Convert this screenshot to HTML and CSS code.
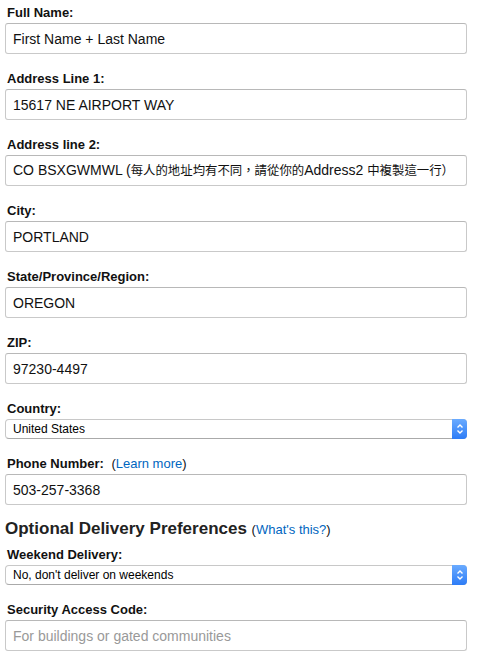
FILE: index.html
```html
<!DOCTYPE html>
<html>
	<head>
		<meta charset="UTF-8" />
		<meta name="viewport" content="width=device-width, initial-scale=1.0" />
		<title>Shipping address</title>
		<link rel="stylesheet" href="styles.css">
	</head>
	<body>
		<form class="address-form">
			<div class="field">
				<label class="field-label">Full Name:</label>
				<input class="text-input" type="text" value="First Name + Last Name" />
			</div>
			<div class="field">
				<label class="field-label">Address Line 1:</label>
				<input class="text-input" type="text" value="15617 NE AIRPORT WAY" />
			</div>
			<div class="field">
				<label class="field-label">Address line 2:</label>
				<!-- mixed latin / cjk value, cjk glyphs are set a bit smaller -->
				<div class="text-input text-mixed" contenteditable="true">CO BSXGWMWL (<span class="cjk">每人的地址均有不同，請從你的</span>Address2 <span class="cjk">中複製這一行）</span></div>
			</div>
			<div class="field">
				<label class="field-label">City:</label>
				<input class="text-input" type="text" value="PORTLAND" />
			</div>
			<div class="field">
				<label class="field-label">State/Province/Region:</label>
				<input class="text-input" type="text" value="OREGON" />
			</div>
			<div class="field">
				<label class="field-label">ZIP:</label>
				<input class="text-input" type="text" value="97230-4497" />
			</div>
			<div class="field">
				<label class="field-label">Country:</label>
				<div class="select-box">
					<select class="select-input">
						<option>United States</option>
					</select>
					<span class="select-arrows">
						<svg width="8" height="12" viewBox="0 0 8 12"><path d="M1.5 4.5 L4 2 L6.5 4.5 M1.5 7.5 L4 10 L6.5 7.5" fill="none" stroke="#fff" stroke-width="1.4"/></svg>
					</span>
				</div>
			</div>
			<div class="field">
				<label class="field-label">Phone Number: <span class="hint">(<a href="#">Learn more</a>)</span></label>
				<input class="text-input" type="text" value="503-257-3368" />
			</div>

			<h2 class="section-title">Optional Delivery Preferences <span class="hint">(<a href="#">What's this?</a>)</span></h2>
			<div class="field">
				<label class="field-label">Weekend Delivery:</label>
				<div class="select-box">
					<select class="select-input">
						<option>No, don't deliver on weekends</option>
					</select>
					<span class="select-arrows">
						<svg width="8" height="12" viewBox="0 0 8 12"><path d="M1.5 4.5 L4 2 L6.5 4.5 M1.5 7.5 L4 10 L6.5 7.5" fill="none" stroke="#fff" stroke-width="1.4"/></svg>
					</span>
				</div>
			</div>
			<div class="field">
				<label class="field-label">Security Access Code:</label>
				<input class="text-input" type="text" placeholder="For buildings or gated communities" />
			</div>
		</form>
	</body>
</html>
```

FILE: styles.css
```css
* {
	margin: 0;
	padding: 0;
	box-sizing: border-box;
}
body {
	font-family: "Liberation Sans", Arial, "Noto Sans CJK TC", sans-serif;
	color: #111;
	background: #fff;
}
.address-form {
	width: 462px;
	margin-left: 5px;
	padding-top: 3px;
}
.field {
	margin-bottom: 15px;
}
.field-label {
	display: block;
	font-size: 13px;
	font-weight: bold;
	line-height: 20px;
	padding-left: 2px;
	color: #111;
}
.hint {
	font-weight: normal;
	margin-left: 4px;
	color: #111;
}
.hint a {
	color: #0066c0;
	text-decoration: none;
}
.text-input {
	display: block;
	width: 100%;
	height: 31px;
	padding: 0 7px;
	font-family: "Liberation Sans", Arial, "Noto Sans CJK TC", sans-serif;
	font-size: 14px;
	color: #111;
	border: 1px solid #c9c9c9;
	border-top-color: #b8b8b8;
	border-radius: 3px;
	background: #fff;
	outline: none;
}
.text-input::placeholder {
	color: #999;
}
.text-mixed {
	line-height: 29px;
	white-space: nowrap;
	overflow: hidden;
}
.text-mixed .cjk {
	font-family: "Noto Sans CJK TC", sans-serif;
	font-size: 12.4px;
}
.select-box {
	position: relative;
	height: 20px;
}
.select-input {
	display: block;
	width: 100%;
	height: 20px;
	padding: 0 7px;
	font-family: "Liberation Sans", Arial, sans-serif;
	font-size: 12px;
	color: #000;
	border: 1px solid #c8c8c8;
	border-bottom-color: #aaa;
	border-radius: 4px;
	background: #fff;
	-webkit-appearance: none;
	appearance: none;
	outline: none;
}
.select-arrows {
	position: absolute;
	top: 0;
	right: 0;
	width: 15px;
	height: 20px;
	border-radius: 0 4px 4px 0;
	background: linear-gradient(#6aabff, #2d7cf6);
	display: flex;
	align-items: center;
	justify-content: center;
}
.section-title {
	font-size: 17px;
	font-weight: bold;
	color: #222;
	line-height: 22px;
	margin-top: -2px;
	margin-bottom: 4px;
}
.section-title .hint {
	font-size: 13px;
	margin-left: 0;
}
```
